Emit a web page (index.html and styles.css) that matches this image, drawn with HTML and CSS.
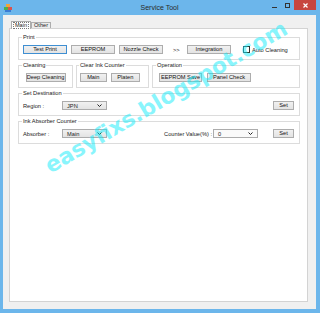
FILE: index.html
```html
<!DOCTYPE html>
<html lang="en">

<head>
    <meta charset="UTF-8">
    <meta name="viewport" content="width=device-width, initial-scale=1.0">
    <title>Service Tool</title>
    <link rel="stylesheet" href="styles.css">
</head>

<body>
    <div class="window">
        <div class="titlebar">
            <svg class="app-icon" viewBox="0 0 8 8">
                <rect x="2" y="0" width="4" height="3" fill="#f2a33a" />
                <rect x="0" y="3" width="4" height="3" fill="#4caf50" />
                <rect x="4" y="3" width="4" height="3" fill="#d9534f" />
                <rect x="1" y="6" width="6" height="2" fill="#3a7bd5" />
            </svg>
            <div class="title">Service Tool</div>
            <div class="controls">
                <span class="btn-min"></span>
                <span class="btn-max"></span>
                <span class="btn-close">
                    <svg viewBox="0 0 5 5" width="5" height="5">
                        <path d="M0.5 0.5 L4.5 4.5 M4.5 0.5 L0.5 4.5" stroke="#fff" stroke-width="1.2" />
                    </svg>
                </span>
            </div>
        </div>

        <div class="client">
            <div class="tabs">
                <div class="tab active"><span class="focus">Main</span></div>
                <div class="tab">Other</div>
            </div>

            <div class="panel">
                <fieldset class="group">
                    <legend>Print</legend>
                    <div class="row">
                        <button class="btn default">Test Print</button>
                        <button class="btn">EEPROM</button>
                        <button class="btn">Nozzle Check</button>
                        <span class="arrows">&gt;&gt;</span>
                        <button class="btn">Integration</button>
                        <label class="check"><span class="box"></span>Auto Cleaning</label>
                    </div>
                </fieldset>

                <div class="split">
                    <fieldset class="group cleaning">
                        <legend>Cleaning</legend>
                        <div class="row center">
                            <button class="btn" id="deepClean">Deep Cleaning</button>
                        </div>
                    </fieldset>
                    <fieldset class="group clear-ink">
                        <legend>Clear Ink Counter</legend>
                        <div class="row">
                            <button class="btn" id="clearMain">Main</button>
                            <button class="btn" id="clearPlaten">Platen</button>
                        </div>
                    </fieldset>
                    <fieldset class="group operation">
                        <legend>Operation</legend>
                        <div class="row">
                            <button class="btn" id="eepromSave">EEPROM Save</button>
                            <button class="btn">Panel Check</button>
                        </div>
                    </fieldset>
                </div>

                <fieldset class="group">
                    <legend>Set Destination</legend>
                    <div class="row">
                        <span class="field-label">Region :</span>
                        <div class="combo"><span>JPN</span><svg viewBox="0 0 5 3" width="5" height="3"><path d="M0.5 0.5 L2.5 2.5 L4.5 0.5" fill="none" stroke="#222" stroke-width="1" /></svg></div>
                        <button class="btn set">Set</button>
                    </div>
                </fieldset>

                <fieldset class="group">
                    <legend>Ink Absorber Counter</legend>
                    <div class="row">
                        <span class="field-label">Absorber :</span>
                        <div class="combo"><span>Main</span><svg viewBox="0 0 5 3" width="5" height="3"><path d="M0.5 0.5 L2.5 2.5 L4.5 0.5" fill="none" stroke="#222" stroke-width="1" /></svg></div>
                        <span class="counter-label">Counter Value(%) :</span>
                        <div class="combo light"><span>0</span><svg viewBox="0 0 5 3" width="5" height="3"><path d="M0.5 0.5 L2.5 2.5 L4.5 0.5" fill="none" stroke="#222" stroke-width="1" /></svg></div>
                        <button class="btn set gap">Set</button>
                    </div>
                </fieldset>
            </div>
        </div>

        <div class="watermark">easyfixs.blogspot.com</div>
    </div>
</body>

</html>
```

FILE: styles.css
```css
* {
    box-sizing: border-box;
}

body {
    margin: 0;
    font-family: "Liberation Sans", Arial, sans-serif;
    color: #1e1e1e;
}

.window {
    position: relative;
    width: 320px;
    height: 313px;
    background-color: #6cb6eb;
    padding: 0 4px 4px 3px;
    display: flex;
    flex-direction: column;
    overflow: hidden;
}

.titlebar {
    height: 15px;
    display: grid;
    grid-template-columns: 1fr auto 1fr;
    align-items: center;
}

.app-icon {
    width: 8px;
    height: 8px;
    margin-left: 1px;
}

.title {
    font-size: 7px;
    line-height: 15px;
    color: #2a2a2a;
}

.controls {
    justify-self: end;
    align-self: start;
    display: flex;
    align-items: flex-start;
}

.btn-min {
    width: 5px;
    height: 1px;
    margin-top: 7px;
    background-color: #333;
}

.btn-max {
    width: 5px;
    height: 5px;
    margin: 3px 4px 0 8px;
    border: 1px solid #333;
}

.btn-close {
    width: 22px;
    height: 10px;
    background-color: #c7463e;
    display: flex;
    align-items: center;
    justify-content: center;
}

.client {
    flex: 1;
    background-color: #f0f0f0;
    padding: 6px 8px 7px 6px;
    display: flex;
    flex-direction: column;
}

.tabs {
    height: 7px;
    padding-left: 2px;
    display: flex;
    align-items: flex-end;
}

.tab {
    width: 20px;
    height: 6px;
    font-size: 5.6px;
    line-height: 5px;
    text-align: center;
    border: 1px solid #adadad;
    border-bottom: 0;
    background-color: #ececec;
}

.tab.active {
    position: relative;
    z-index: 1;
    height: 8px;
    margin-bottom: -1px;
    background-color: #fff;
    line-height: 6px;
}

.focus {
    display: inline-block;
    padding: 0 1px;
    line-height: 5px;
    margin-top: 1px;
    outline: 1px dotted #777;
}

.panel {
    flex: 1;
    background-color: #fff;
    border: 1px solid #d3d3d3;
    padding: 5px 7px 0 8px;
    display: flex;
    flex-direction: column;
    gap: 2px;
}

.group {
    margin: 0;
    min-width: 0;
    padding: 4px 4px 5px;
    border: 1px solid #dcdcdc;
}

.group legend {
    font-size: 5.7px;
    line-height: 7px;
    padding: 0 1px;
    margin-left: -1px;
    color: #222;
}

.row {
    display: flex;
    align-items: center;
    font-size: 5.7px;
}

.row.center {
    justify-content: center;
}

.split {
    display: flex;
    gap: 3px;
}

.cleaning {
    width: 55px;
}

.clear-ink {
    width: 73px;
    padding-left: 3px;
}

.operation {
    flex: 1;
}

.btn {
    font: inherit;
    font-size: 5.7px;
    width: 44px;
    height: 9px;
    line-height: 7px;
    padding: 0;
    margin: 0 4px 0 0;
    color: #111;
    border: 1px solid #adadad;
    background: linear-gradient(#f1f1f1, #e3e3e3);
}

.btn.default {
    border-color: #3f8fd2;
}

#deepClean {
    width: 40px;
    margin: 0;
}

#clearMain {
    width: 28px;
}

#clearPlaten {
    width: 31px;
}

#eepromSave {
    width: 43px;
    margin-left: 2px;
    margin-right: 5px;
}

.arrows {
    width: 7px;
    margin: 0 7px 0 6px;
    font-size: 5.7px;
}

.check {
    display: flex;
    align-items: center;
    margin-left: 8px;
    color: #222;
}

.box {
    width: 7px;
    height: 7px;
    margin-right: 2px;
    border: 1px solid #333;
    background-color: #fff;
}

.field-label {
    width: 39px;
    color: #222;
}

.combo {
    width: 45px;
    height: 9px;
    padding: 0 4px 0 4px;
    display: flex;
    align-items: center;
    justify-content: space-between;
    border: 1px solid #acacac;
    background: linear-gradient(#f1f1f1, #e3e3e3);
}

.combo.light {
    background: #fafafa;
}

.btn.set {
    width: 21px;
    margin: 0 1px 0 auto;
}

.btn.set.gap {
    margin-left: 15px;
}

.counter-label {
    margin-left: auto;
    margin-right: 1px;
    color: #222;
}

.watermark {
    position: absolute;
    left: 166px;
    top: 97px;
    transform: translate(-50%, -50%) rotate(-30.5deg);
    font-family: "DejaVu Sans", sans-serif;
    font-weight: bold;
    font-size: 22px;
    white-space: nowrap;
    color: rgba(20, 235, 250, 0.5);
    pointer-events: none;
}
```
